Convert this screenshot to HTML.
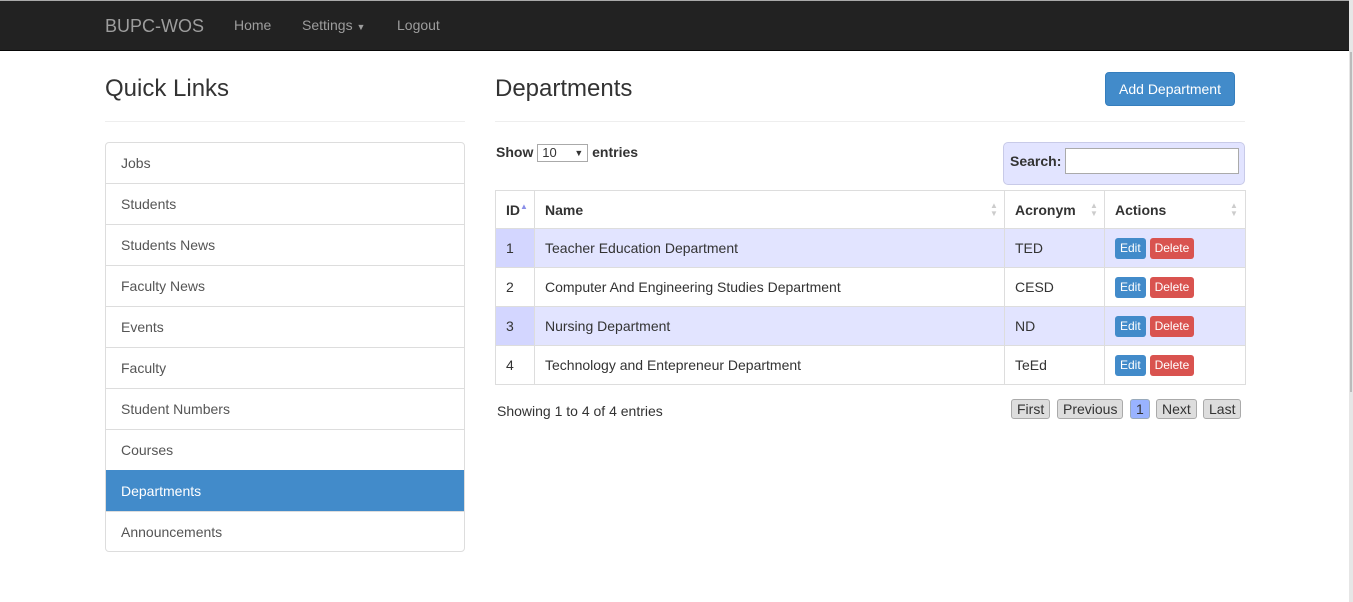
<!DOCTYPE html>
<html><head><style>
*{box-sizing:border-box;margin:0;padding:0}
body{width:1353px;height:602px;overflow:hidden;background:#fff;font-family:"Liberation Sans",sans-serif;font-size:14px;color:#333;position:relative}
.nav{position:absolute;left:0;top:0;width:1349px;height:51px;background:#222;border-top:1px solid #aaa;border-bottom:1px solid #080808}
.nav span{position:absolute;color:#9d9d9d;top:16px;font-size:14px}
.sb{position:absolute;right:0;top:0;width:4px;height:602px;background:#e6e6e6}
.sb:after{content:"";position:absolute;left:1px;top:52px;width:2px;height:340px;background:#bbb}
.abs{position:absolute}
h3{font-weight:500;font-size:24px;color:#333;position:absolute}
.hr{position:absolute;height:1px;background:#eee}
.lg{position:absolute;left:105px;top:142px;width:360px;border:1px solid #ddd;border-radius:4px;overflow:hidden}
.lg div{height:41px;line-height:40px;padding-left:15px;border-top:1px solid #ddd;color:#555}
.lg div:first-child{border-top:none;height:40px}
.lg div:last-child{height:40px}
.lg .act{background:#428bca;color:#fff;border-color:#428bca}
table{position:absolute;left:495px;top:190px;width:750px;border-collapse:collapse;table-layout:fixed}
td,th{border:1px solid #ddd;height:39px;padding:0 10px;text-align:left;white-space:nowrap}
th{font-weight:bold;height:38px}
tr.o td{background:#e2e4ff}
tr.o td:first-child{background:#d3d6ff}
.b{display:inline-block;color:#fff;font-size:12px;padding:3px 5px;border-radius:3px;line-height:15px}
.e{background:#428bca}.d{background:#d9534f}
.pg{position:absolute;top:399px;height:20px;line-height:18px;border:1px solid #aaa;border-radius:3px;background:#ddd;padding:0 5px;color:#333}
.arr{position:absolute;color:#ccc;font-size:8px;line-height:8px}
</style></head><body>
<div class="nav">
<span style="left:105px;top:15px;font-size:18px">BUPC-WOS</span>
<span style="left:234px">Home</span>
<span style="left:302px">Settings <span style="position:static;font-size:9px">▼</span></span>
<span style="left:397px">Logout</span>
</div>
<div class="sb"></div>
<h3 style="left:105px;top:75px">Quick Links</h3>
<div class="hr" style="left:105px;top:121px;width:360px"></div>
<div class="lg">
<div>Jobs</div><div>Students</div><div>Students News</div><div>Faculty News</div><div>Events</div><div>Faculty</div><div>Student Numbers</div><div>Courses</div><div class="act">Departments</div><div>Announcements</div>
</div>
<h3 style="left:495px;top:75px">Departments</h3>
<div class="abs" style="left:1105px;top:72px;width:130px;height:34px;background:#428bca;border:1px solid #357ebd;border-radius:4px;color:#fff;text-align:center;line-height:32px">Add Department</div>
<div class="hr" style="left:495px;top:121px;width:750px"></div>
<div class="abs" style="left:496px;top:144px;font-weight:bold">Show <span style="display:inline-block;width:51px;height:18px;border:1px solid #aaa;font-weight:normal;font-size:13px;line-height:16px;padding-left:4px;vertical-align:middle;position:relative">10<span style="position:absolute;right:4px;font-size:9px">▼</span></span> entries</div>
<div class="abs" style="left:1003px;top:142px;width:242px;height:43px;background:#e2e4ff;border:1px solid #c8cae8;border-radius:5px"></div>
<div class="abs" style="left:1010px;top:153px;font-weight:bold">Search:</div>
<div class="abs" style="left:1065px;top:148px;width:174px;height:26px;background:#fff;border:1px solid #aaa"></div>
<table>
<colgroup><col style="width:39px"><col style="width:470px"><col style="width:100px"><col style="width:141px"></colgroup>
<tr><th>ID<span style="color:#8a8fe8;font-size:8px;vertical-align:top">▲</span></th><th>Name</th><th>Acronym</th><th>Actions</th></tr>
<tr class="o"><td>1</td><td>Teacher Education Department</td><td>TED</td><td><span class="b e">Edit</span> <span class="b d">Delete</span></td></tr>
<tr><td>2</td><td>Computer And Engineering Studies Department</td><td>CESD</td><td><span class="b e">Edit</span> <span class="b d">Delete</span></td></tr>
<tr class="o"><td>3</td><td>Nursing Department</td><td>ND</td><td><span class="b e">Edit</span> <span class="b d">Delete</span></td></tr>
<tr><td>4</td><td>Technology and Entepreneur Department</td><td>TeEd</td><td><span class="b e">Edit</span> <span class="b d">Delete</span></td></tr>
</table>
<div class="arr" style="left:990px;top:202px">▲<br>▼</div>
<div class="arr" style="left:1090px;top:202px">▲<br>▼</div>
<div class="arr" style="left:1230px;top:202px">▲<br>▼</div>
<div class="abs" style="left:497px;top:403px">Showing 1 to 4 of 4 entries</div>
<div class="pg" style="left:1011px">First</div>
<div class="pg" style="left:1057px">Previous</div>
<div class="pg" style="left:1130px;background:#99b3ff;border-color:#9ab">1</div>
<div class="pg" style="left:1156px">Next</div>
<div class="pg" style="left:1203px">Last</div>
</body></html>
